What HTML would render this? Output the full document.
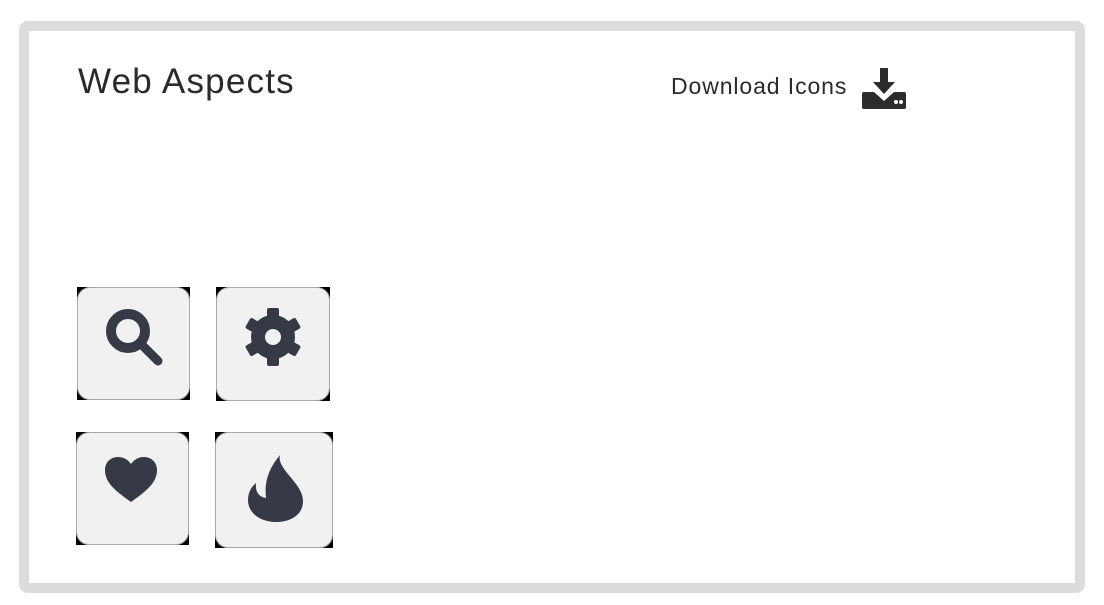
<!DOCTYPE html>
<html><head><style>
body{margin:0;width:1104px;height:605px;background:#fff;font-family:"Liberation Sans",sans-serif;position:relative;overflow:hidden}
.frame{position:absolute;left:19px;top:21px;width:1046px;height:552px;border:10px solid #dcdcdc;border-radius:9px;background:#fff}
h1{position:absolute;left:78px;top:62px;margin:0;font-weight:normal;font-size:35px;letter-spacing:1.2px;color:#2a2a2a}
.dl{position:absolute;left:671px;top:73px;font-size:23px;letter-spacing:0.9px;color:#2a2a2a}
.t{position:absolute;background:#000}
.t div{position:absolute;inset:0;background:#f1f1f1;border-radius:13px;border:1px solid #aaa}
.t svg{position:absolute;left:0;top:0}
</style></head><body>
<div class="frame"></div>
<h1>Web Aspects</h1>
<div class="dl">Download Icons</div>
<svg style="position:absolute;left:862px;top:68px" width="44" height="41" viewBox="0 0 44 41">
<path d="M18 0h8v14h7l-11 12-11-12h7z" fill="#2b2b2b"/>
<path d="M2 24h10l10 9 10-9h10a2 2 0 0 1 2 2v13a2 2 0 0 1-2 2H2a2 2 0 0 1-2-2V26a2 2 0 0 1 2-2z" fill="#2b2b2b"/>
<circle cx="34" cy="34" r="2" fill="#fff"/><circle cx="39" cy="34" r="2" fill="#fff"/>
</svg>
<div class="t" style="left:77px;top:287px;width:113px;height:113px"><div></div>
<svg width="113" height="113"><circle cx="51" cy="44" r="17" fill="none" stroke="#363a47" stroke-width="10"/><path d="M65 58l16 16" stroke="#363a47" stroke-width="9" stroke-linecap="round"/></svg></div>
<div class="t" style="left:216px;top:287px;width:114px;height:114px"><div></div>
<svg width="114" height="114" viewBox="-57 -50 114 114"><g fill="#363a47"><circle r="22"/>
<rect x="-6" y="-29" width="12" height="58" rx="2"/><rect x="-6" y="-29" width="12" height="58" rx="2" transform="rotate(60)"/><rect x="-6" y="-29" width="12" height="58" rx="2" transform="rotate(120)"/></g><circle r="8" fill="#f1f1f1"/></svg></div>
<div class="t" style="left:76px;top:432px;width:113px;height:113px"><div></div>
<svg width="113" height="113" viewBox="0 0 113 113"><path d="M55 70C38 58 29 50 29 38c0-8 6-13 13-13 6 0 10 3 13 7 3-4 7-7 13-7 7 0 13 5 13 13 0 12-9 20-26 32z" fill="#363a47"/></svg></div>
<div class="t" style="left:215px;top:432px;width:118px;height:116px"><div></div>
<svg width="118" height="116" viewBox="0 0 118 116"><path d="M65 23c-4 14 23 28 23 46 0 13-11 21-27 21S33 81 33 68c0-8 4-14 8-17 -1 9 3 14 10 15 -2-18 4-31 14-43z" fill="#363a47"/></svg></div>
</body></html>
